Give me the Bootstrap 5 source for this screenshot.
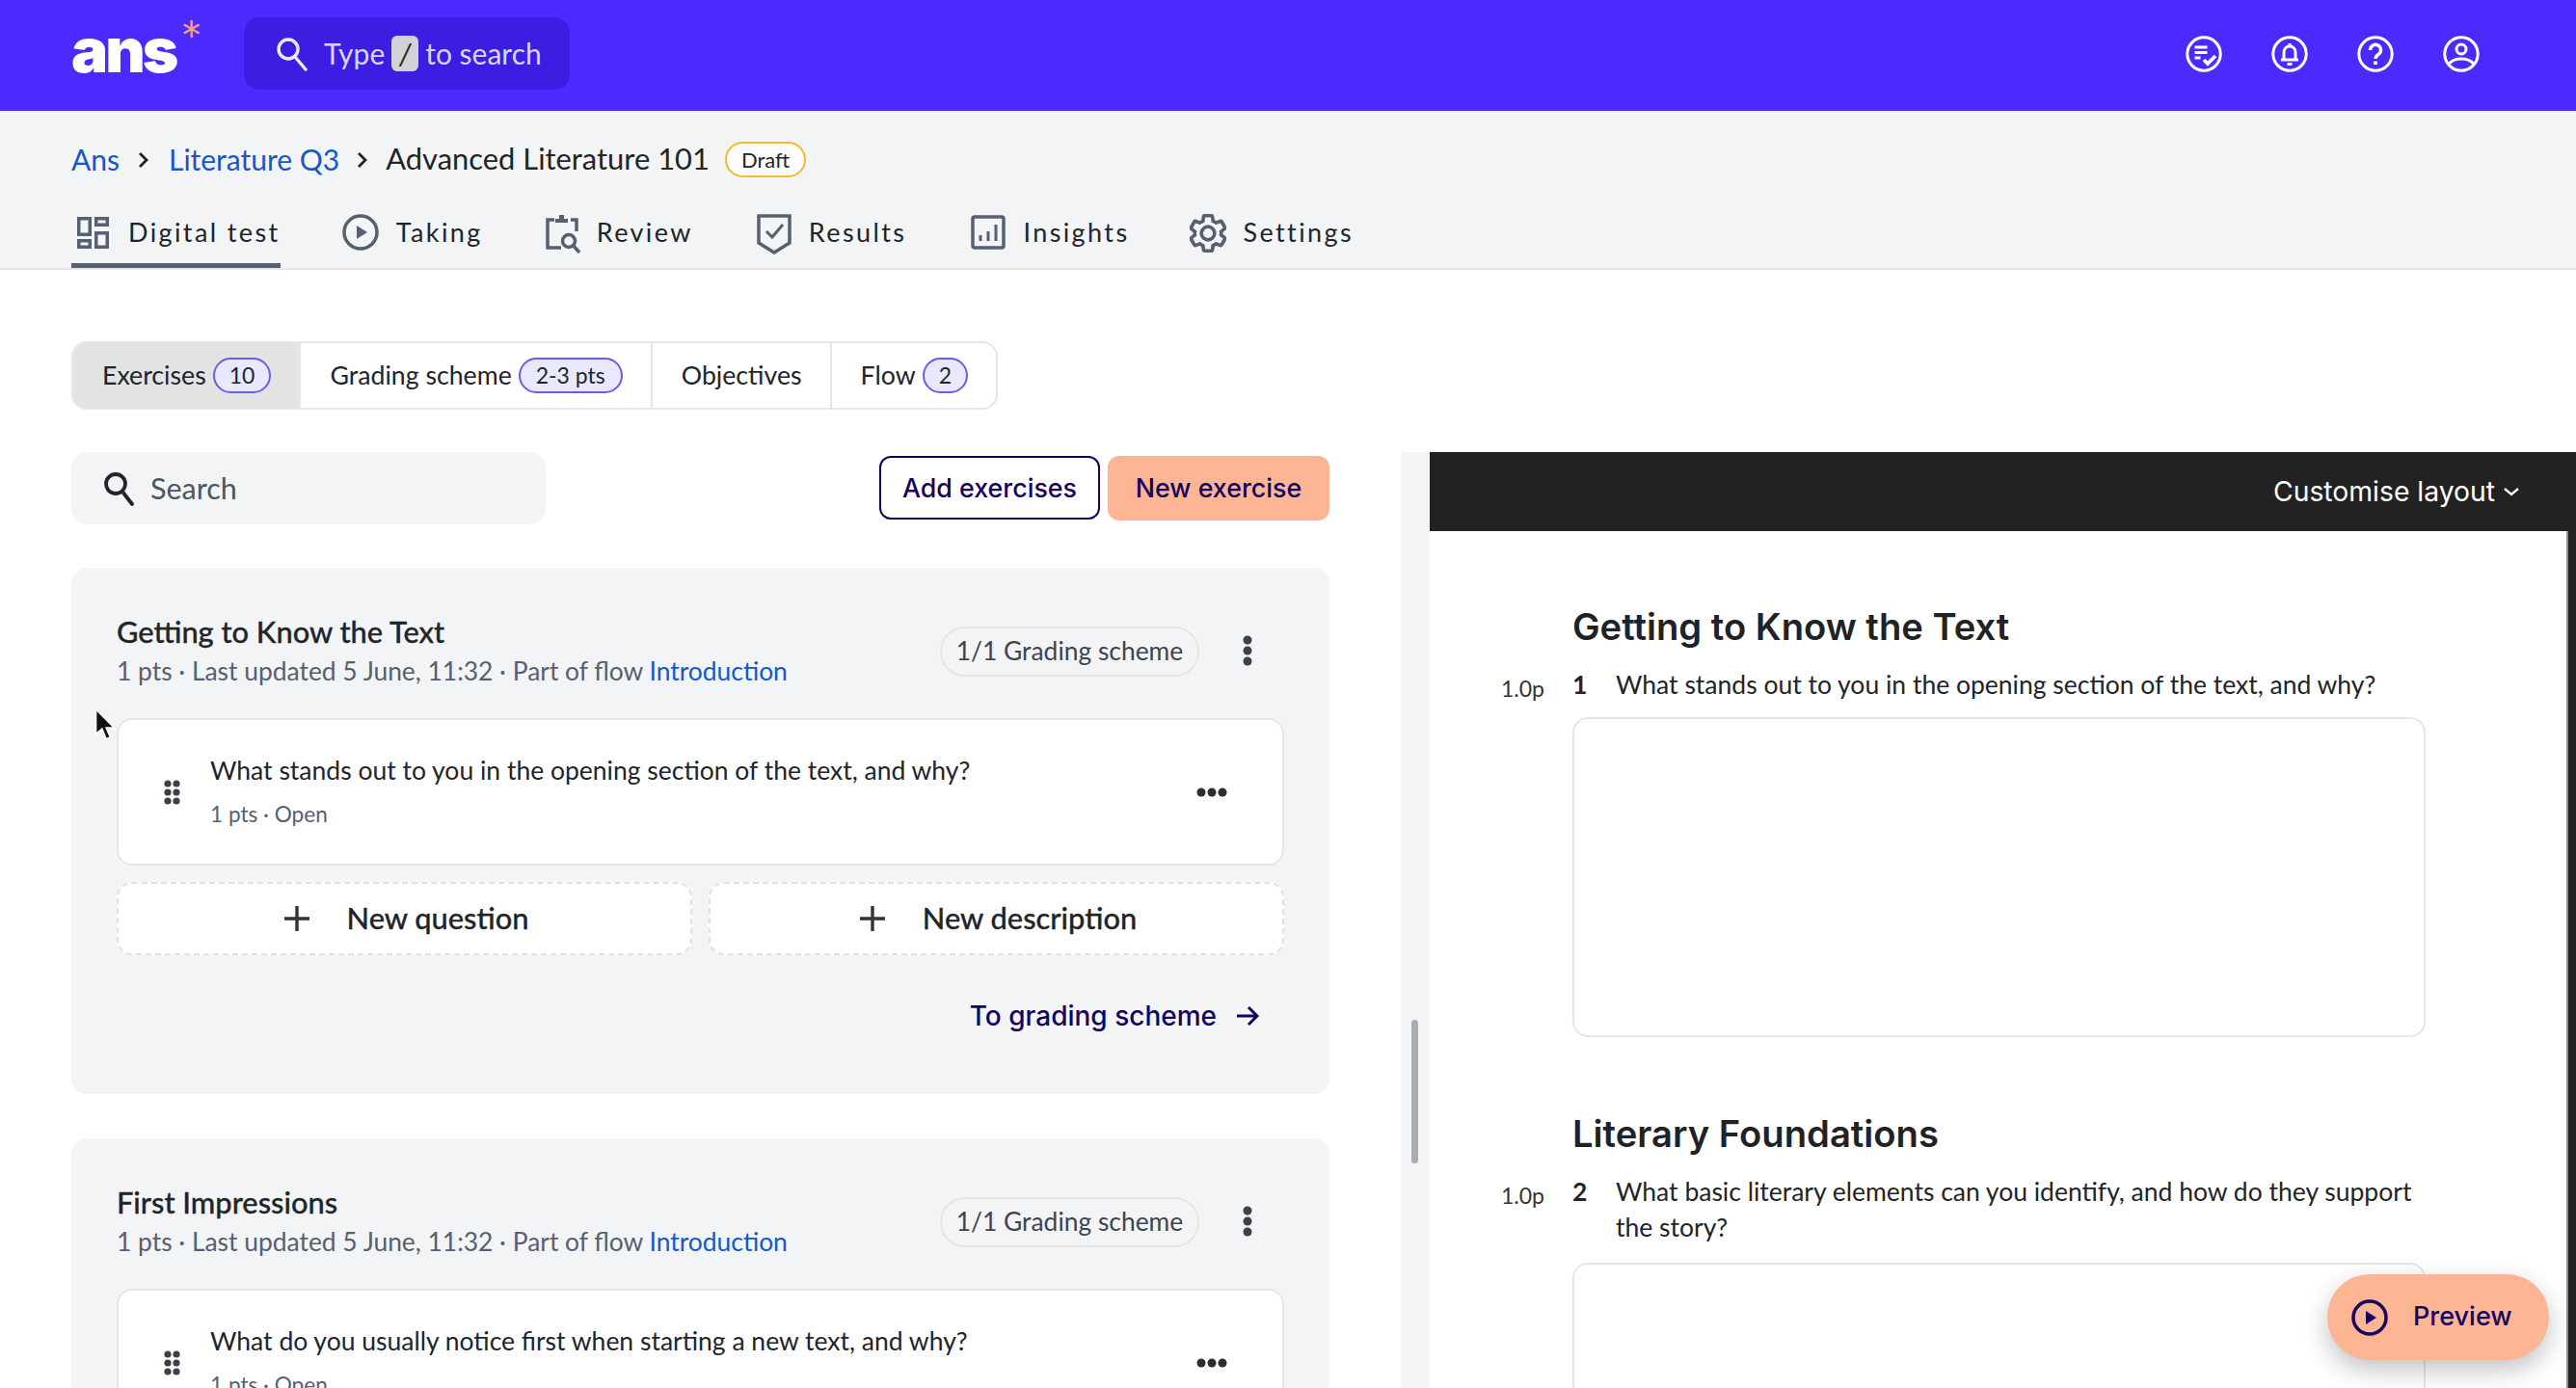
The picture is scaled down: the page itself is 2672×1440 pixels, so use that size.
<!doctype html>
<html lang="en">
<head>
<meta charset="utf-8">
<title>Advanced Literature 101</title>
<link rel="stylesheet" href="https://cdn.jsdelivr.net/npm/bootstrap@5.3.0/dist/css/bootstrap.min.css">
<style>
html,body{height:1440px;overflow:hidden}
body{font-family:"Lato","Noto Sans",sans-serif;font-size:26px;color:#212529;background:#fff}
.topbar{height:115px;background:#4b2aff;padding:0 100px 0 74px}
.logo{font-family:"Inter",sans-serif;font-weight:900;font-size:64px;line-height:1;color:#fff;letter-spacing:-3px;width:179px;margin-top:-12px}
.logo sup{color:#f9a27a;font-weight:300;font-size:44px;top:-.5em;margin-left:5px;line-height:0}
.topsearch{width:338px;height:75px;background:#3c1de2;border-radius:16px;padding-left:33px;color:#d9d6f7;font-size:30px;margin-bottom:4px}
.slashkey{display:inline-flex;align-items:center;justify-content:center;width:28px;height:37px;background:#d2d2d6;color:#222;border-radius:6px;margin:0 7px;font-style:italic}
.topicons{gap:51px;margin-bottom:4px}
.subhead{height:165px;background:#f3f4f6;border-bottom:2px solid #e4e6e8;padding:0 0 0 74px}
.crumbs{height:98px;font-size:30px;padding-top:3px}
.crumbs a{color:#1259c9;text-decoration:none}
.crumb-sep{margin:0 18.500px}
.crumb-sep.tight{margin:0 17px}
.crumb-now{font-size:30.900px}
.draft{border:2px solid #f5b82e;background:#fff;border-radius:20px;height:37px;padding:0 15px;font-size:22px;margin-left:16px;display:flex;align-items:center}
.maintabs{gap:0;height:65px}
.maintab{display:flex;gap:18px;align-items:flex-start;padding-top:10px;height:65px;letter-spacing:2.4px;font-size:27px;line-height:36px;color:#212529;text-decoration:none;border-bottom:5px solid transparent;margin-right:64px}
.maintab.on{border-color:#566070}
.maintab svg{flex:none;margin-top:-1px}
.maintab.narrowgap{gap:16px;margin-right:66px}
.maintab.shift{margin-left:3px;margin-right:62px}
.segwrap{padding:74px 0 0 74px;height:189px}
.segtabs{display:inline-flex;height:71px;border:2px solid #e4e6e8;border-radius:16px;overflow:hidden;font-size:26.700px}
.segtab{display:flex;align-items:center;gap:7px;padding:0 29px 0 30px;border-right:2px solid #e4e6e8;color:#212529;text-decoration:none}
.segtab:last-child{border-right:0}
.segtab.on{background:#e2e4e3}
.cntpill{height:37px;min-width:37px;padding:0 15px;display:inline-flex;align-items:center;justify-content:center;border:2px solid #6f5ce6;background:#e8e8ff;border-radius:20px;font-size:23px}
.cntpill.wider{padding:0 16px}
.workspace{height:971px}
.leftpane{width:1453px;flex:none;padding:0 74px;overflow:hidden}
.searchrow{height:120px}
.leftsearch{width:492px;height:75px;background:#f3f4f6;border-radius:16px;padding-left:32px;color:#4c5560;font-size:30.500px;gap:16px}
.ghostbtn,.peachbtn{height:66px;border-radius:12px;font-family:"Inter",sans-serif;font-size:26.800px;font-weight:500;color:#14035f;display:flex;align-items:center;justify-content:center;padding:0;width:229px}
.ghostbtn{border:2px solid #14035f;background:#fff}
.peachbtn{background:#fdb594;border:0;height:67px;width:230px;margin-left:8px}
.secbox{background:#f3f4f6;border-radius:16px;padding:45px 47px 0;margin-bottom:46px;height:546px}
.secbox h2{font-size:30.800px;font-weight:500;line-height:43px;margin:0;-webkit-text-stroke:.3px #212529}
.secmeta{font-size:26.400px;line-height:38px;color:#566070}
.secmeta a{color:#1259c9;text-decoration:none}
.gradepill{height:52px;width:269px;border:2px solid #e4e6e8;border-radius:26px;display:flex;align-items:center;justify-content:center;font-size:26.400px;color:#3c4550;margin:2px 44px 0 0}
.kebab{margin-right:32px}
.qcard{background:#fff;border:2px solid #e4e6e8;border-radius:16px;height:153px;margin-top:30px;padding:0 57px 0 47px}
.grip{flex:none;margin-right:31px}
.qbody{margin-bottom:1px}
.qtext{font-size:26.500px;line-height:36px}
.qmeta{font-size:22.600px;color:#566070;line-height:32px;margin-top:12px}
.addrow{gap:17px;margin-top:17px}
.addbtn{flex:1;height:76px;background:#fff;border:2px dashed #dfe1e4;border-radius:16px;font-size:30.800px;font-weight:500;display:flex;align-items:center;justify-content:center;gap:37px;padding-left:8px;color:#212529;-webkit-text-stroke:.3px #212529}
.tograde{font-family:"Inter",sans-serif;font-size:28px;font-weight:500;color:#14035f;margin-top:45px;padding-right:26px;gap:20px;line-height:36px}
.gutter{width:30px;flex:none;background:#f3f4f6;padding-top:589px}
.thumb{width:7px;height:149px;background:#a9adb1;border-radius:4px;margin-left:11px}
.rightpane{flex:1;position:relative;overflow:hidden;background:#222}
.darkbar{height:82px;background:#222;color:#fff;font-family:"Inter",sans-serif;font-size:28.300px;padding:0 58px 0 0;gap:8px}
.previewdoc{padding:72px 0 0 74px;height:889px;overflow:hidden;background:#fff;margin-right:8px;border-right:2px solid #8c8f93}
.doc-h{font-family:"Inter",sans-serif;font-weight:600;font-size:38.200px;line-height:54px;margin:0 0 0 74px;color:#1f2226}
.doc-h.later{margin-top:73px}
.docq{display:flex;font-size:26.500px;line-height:37px;margin-top:15px}
.docp{width:74px;flex:none;font-size:23px;padding-top:4px;color:#333}
.docn{width:45px;flex:none;font-weight:700}
.doct{width:835px}
.ansbox{margin-left:74px;width:885px;border:2px solid #e4e6e8;border-radius:16px;height:332px;margin-top:11px}
.ansbox.after-two{margin-top:18px}
.previewfab{position:absolute;right:28px;top:853px;width:230px;height:89px;border-radius:44px;background:#fdb594;color:#14035f;font-family:"Inter",sans-serif;font-weight:500;font-size:27px;gap:26px;padding-left:25px;box-shadow:0 10px 26px rgba(30,35,50,.28)}
.pointer{position:absolute;left:97px;top:735px;z-index:5}
</style>
</head>
<body class="position-relative">
<svg class="pointer" width="22" height="36" viewBox="0 0 20 34"><path d="M2 1v24l6-5 4 10 4-2-4-9h8z" fill="#111" stroke="#fff" stroke-width="1.5"/></svg>

<header class="topbar d-flex align-items-center">
  <div class="logo">ans<sup>*</sup></div>
  <div class="topsearch d-flex align-items-center">
    <svg class="me-3" width="34" height="36" viewBox="0 0 34 36" fill="none" stroke="#eceaff" stroke-width="3.4"><circle cx="13" cy="13" r="10"/><path d="M20 21l11 13" stroke-linecap="round"/></svg>
    <span>Type</span><span class="slashkey">/</span><span>to search</span>
  </div>
  <div class="ms-auto d-flex topicons">
    <svg width="38" height="38" viewBox="0 0 38 38" fill="none" stroke="#fff" stroke-width="3"><circle cx="19" cy="19" r="17.200"/><path d="M9.500 12h13M9.500 17.500h13M9.500 23h6" stroke-width="3"/><path d="M19 25l4 4 8-8" stroke-width="3.800"/></svg>
    <svg width="38" height="38" viewBox="0 0 38 38" fill="none" stroke="#fff" stroke-width="3"><circle cx="19" cy="19" r="17.200"/><path d="M13 24v-7a6 6 0 0 1 12 0v7" /><path d="M19 8v3M10 25h18M16.500 29.500h5"/></svg>
    <svg width="38" height="38" viewBox="0 0 38 38" fill="none" stroke="#fff" stroke-width="3"><circle cx="19" cy="19" r="17.200"/><path d="M13.500 15a5.500 5.500 0 1 1 8.500 4.500c-2.200 1.400-3 2.300-3 4.500" stroke-width="3.400"/><path d="M19 26.500v3.500" stroke-width="3.600"/></svg>
    <svg width="38" height="38" viewBox="0 0 38 38" fill="none" stroke="#fff" stroke-width="3"><circle cx="19" cy="19" r="17.200"/><circle cx="19" cy="14" r="5"/><path d="M6.500 29c3-3.500 7.500-5 12.500-5s9.500 1.500 12.500 5"/></svg>
  </div>
</header>

<section class="subhead">
  <div class="crumbs d-flex align-items-center">
    <a href="#">Ans</a>
    <svg class="crumb-sep" width="14" height="20" viewBox="0 0 14 20" fill="none" stroke="#222" stroke-width="2.800"><path d="M3 3l7 7-7 7"/></svg>
    <a href="#">Literature Q3</a>
    <svg class="crumb-sep tight" width="14" height="20" viewBox="0 0 14 20" fill="none" stroke="#222" stroke-width="2.800"><path d="M3 3l7 7-7 7"/></svg>
    <span class="crumb-now">Advanced Literature 101</span>
    <span class="draft">Draft</span>
  </div>
  <nav class="maintabs d-flex">
    <a class="maintab on" href="#"><svg width="41" height="38" viewBox="0 0 41 38" fill="none" stroke="#566070" stroke-width="3.500"><rect x="7.750" y="4.750" width="11.500" height="16.500"/><rect x="25.750" y="4.750" width="11.500" height="6.500"/><rect x="7.750" y="27.750" width="11.500" height="6.500"/><rect x="25.750" y="19.750" width="11.500" height="14.500"/></svg>Digital test</a>
    <a class="maintab" href="#"><svg width="38" height="38" viewBox="0 0 38 38" fill="none" stroke="#566070" stroke-width="3.500"><circle cx="19" cy="19" r="17"/><path d="M15 12l11 7-11 7z" fill="#566070" stroke="none"/></svg>Taking</a>
    <a class="maintab narrowgap" href="#"><svg width="38" height="42" viewBox="0 0 38 42" fill="none" stroke="#566070" stroke-width="3.500"><path d="M10 6H3v29h14M27 6h6v12"/><path d="M11 9V5h4V1h5v4h4v4z" fill="#566070" stroke="none"/><circle cx="25" cy="28" r="6.500"/><path d="M30 33l6 7"/></svg>Review</a>
    <a class="maintab" href="#"><svg width="36" height="42" viewBox="0 0 36 42" fill="none" stroke="#566070" stroke-width="3.500"><path d="M2 2h32v28L18 40 2 30z"/><path d="M10 18l6 6 11-13" stroke-width="3"/></svg>Results</a>
    <a class="maintab shift" href="#"><svg width="36" height="38" viewBox="0 0 36 38" fill="none" stroke="#566070" stroke-width="3.500"><rect x="2" y="3" width="32" height="32" rx="2"/><path d="M10 28v-6M18 28V18M26 28V11" stroke-width="3"/></svg>Insights</a>
    <a class="maintab" href="#"><svg width="38" height="40" viewBox="2 1.500 20 21" fill="none" stroke="#566070" stroke-width="1.900"><path d="M19.140 12.940c.04-.3.06-.61.06-.94 0-.32-.02-.64-.07-.94l2.030-1.580a.49.49 0 0 0 .12-.61l-1.920-3.320a.488.488 0 0 0-.59-.22l-2.390.96c-.5-.38-1.030-.7-1.620-.94l-.36-2.540a.484.484 0 0 0-.48-.41h-3.840c-.24 0-.43.17-.47.41l-.36 2.540c-.59.24-1.130.57-1.620.94l-2.390-.96c-.22-.08-.47 0-.59.22L2.740 8.870c-.12.21-.08.47.12.61l2.030 1.580c-.05.3-.09.63-.09.94s.02.64.07.94l-2.030 1.580a.49.49 0 0 0-.12.61l1.920 3.320c.12.22.37.29.59.22l2.390-.96c.5.38 1.030.7 1.620.94l.36 2.540c.05.24.24.41.48.41h3.840c.24 0 .44-.17.47-.41l.36-2.540c.59-.24 1.130-.56 1.620-.94l2.390.96c.22.08.47 0 .59-.22l1.920-3.320c.12-.22.07-.47-.12-.61l-2.010-1.580zM12 15.600c-1.980 0-3.600-1.620-3.600-3.600s1.620-3.600 3.600-3.600 3.600 1.620 3.600 3.600-1.620 3.600-3.600 3.600z"/></svg>Settings</a>
  </nav>
</section>

<div class="segwrap">
  <div class="segtabs">
    <a class="segtab on" href="#">Exercises <span class="cntpill">10</span></a>
    <a class="segtab" href="#">Grading scheme <span class="cntpill wider">2-3 pts</span></a>
    <a class="segtab" href="#">Objectives</a>
    <a class="segtab" href="#">Flow <span class="cntpill">2</span></a>
  </div>
</div>

<main class="workspace d-flex">
  <div class="leftpane">
    <div class="searchrow d-flex justify-content-between align-items-start">
      <div class="leftsearch d-flex align-items-center">
        <svg width="34" height="36" viewBox="0 0 34 36" fill="none" stroke="#212529" stroke-width="3.800"><circle cx="14" cy="13" r="10"/><path d="M21 21l10 13" stroke-linecap="round"/></svg>
        <span>Search</span>
      </div>
      <div class="d-flex mt-1">
        <button class="ghostbtn" type="button">Add exercises</button>
        <button class="peachbtn" type="button">New exercise</button>
      </div>
    </div>

    <section class="secbox">
      <div class="d-flex align-items-center justify-content-between">
        <div>
          <h2>Getting to Know the Text</h2>
          <div class="secmeta">1 pts · Last updated 5 June, 11:32 · Part of flow <a href="#">Introduction</a></div>
        </div>
        <div class="d-flex align-items-center">
          <span class="gradepill">1/1 Grading scheme</span>
          <svg class="kebab" width="12" height="32" viewBox="0 0 12 32" fill="#3c4148"><circle cx="6" cy="5" r="4.500"/><circle cx="6" cy="16" r="4.500"/><circle cx="6" cy="27" r="4.500"/></svg>
        </div>
      </div>
      <div class="qcard d-flex align-items-center">
        <svg class="grip" width="17" height="26" viewBox="0 0 17 26" fill="#3c4148"><circle cx="4" cy="4" r="3.600"/><circle cx="13" cy="4" r="3.600"/><circle cx="4" cy="13" r="3.600"/><circle cx="13" cy="13" r="3.600"/><circle cx="4" cy="22" r="3.600"/><circle cx="13" cy="22" r="3.600"/></svg>
        <div class="flex-grow-1 qbody">
          <div class="qtext">What stands out to you in the opening section of the text, and why?</div>
          <div class="qmeta">1 pts · Open</div>
        </div>
        <svg width="32" height="10" viewBox="0 0 32 10" fill="#2a2e33"><circle cx="5" cy="5" r="4.500"/><circle cx="16" cy="5" r="4.500"/><circle cx="27" cy="5" r="4.500"/></svg>
      </div>
      <div class="addrow d-flex">
        <button class="addbtn" type="button"><svg width="30" height="30" viewBox="0 0 30 30" stroke="#333" stroke-width="3.400"><path d="M15 2v26M2 15h26"/></svg>New question</button>
        <button class="addbtn" type="button"><svg width="30" height="30" viewBox="0 0 30 30" stroke="#333" stroke-width="3.400"><path d="M15 2v26M2 15h26"/></svg>New description</button>
      </div>
      <div class="tograde d-flex justify-content-end align-items-center">To grading scheme
        <svg width="24" height="24" viewBox="0 0 24 24" fill="none" stroke="#14035f" stroke-width="3"><path d="M1 12h21M13 3l9 9-9 9"/></svg>
      </div>
    </section>

    <section class="secbox">
      <div class="d-flex align-items-center justify-content-between">
        <div>
          <h2>First Impressions</h2>
          <div class="secmeta">1 pts · Last updated 5 June, 11:32 · Part of flow <a href="#">Introduction</a></div>
        </div>
        <div class="d-flex align-items-center">
          <span class="gradepill">1/1 Grading scheme</span>
          <svg class="kebab" width="12" height="32" viewBox="0 0 12 32" fill="#3c4148"><circle cx="6" cy="5" r="4.500"/><circle cx="6" cy="16" r="4.500"/><circle cx="6" cy="27" r="4.500"/></svg>
        </div>
      </div>
      <div class="qcard d-flex align-items-center">
        <svg class="grip" width="17" height="26" viewBox="0 0 17 26" fill="#3c4148"><circle cx="4" cy="4" r="3.600"/><circle cx="13" cy="4" r="3.600"/><circle cx="4" cy="13" r="3.600"/><circle cx="13" cy="13" r="3.600"/><circle cx="4" cy="22" r="3.600"/><circle cx="13" cy="22" r="3.600"/></svg>
        <div class="flex-grow-1 qbody">
          <div class="qtext">What do you usually notice first when starting a new text, and why?</div>
          <div class="qmeta">1 pts · Open</div>
        </div>
        <svg width="32" height="10" viewBox="0 0 32 10" fill="#2a2e33"><circle cx="5" cy="5" r="4.500"/><circle cx="16" cy="5" r="4.500"/><circle cx="27" cy="5" r="4.500"/></svg>
      </div>
    </section>
  </div>

  <div class="gutter"><div class="thumb"></div></div>

  <aside class="rightpane">
    <div class="darkbar d-flex align-items-center justify-content-end">Customise layout
      <svg width="18" height="12" viewBox="0 0 18 12" fill="none" stroke="#fff" stroke-width="2.400"><path d="M2 3l7 6 7-6"/></svg>
    </div>
    <div class="previewdoc">
      <h3 class="doc-h">Getting to Know the Text</h3>
      <div class="docq"><div class="docp">1.0p</div><div class="docn">1</div><div class="doct">What stands out to you in the opening section of the text, and why?</div></div>
      <div class="ansbox"></div>
      <h3 class="doc-h later">Literary Foundations</h3>
      <div class="docq"><div class="docp">1.0p</div><div class="docn">2</div><div class="doct">What basic literary elements can you identify, and how do they support the story?</div></div>
      <div class="ansbox after-two"></div>
    </div>
    <div class="previewfab d-flex align-items-center">
      <svg width="38" height="38" viewBox="0 0 38 38" fill="none" stroke="#14035f" stroke-width="3.500"><circle cx="19" cy="19" r="17"/><path d="M15 12l11 7-11 7z" fill="#14035f" stroke="none"/></svg>
      Preview
    </div>
  </aside>
</main>
<script src="https://cdn.jsdelivr.net/npm/bootstrap@5.3.0/dist/js/bootstrap.bundle.min.js"></script>
</body>
</html>
